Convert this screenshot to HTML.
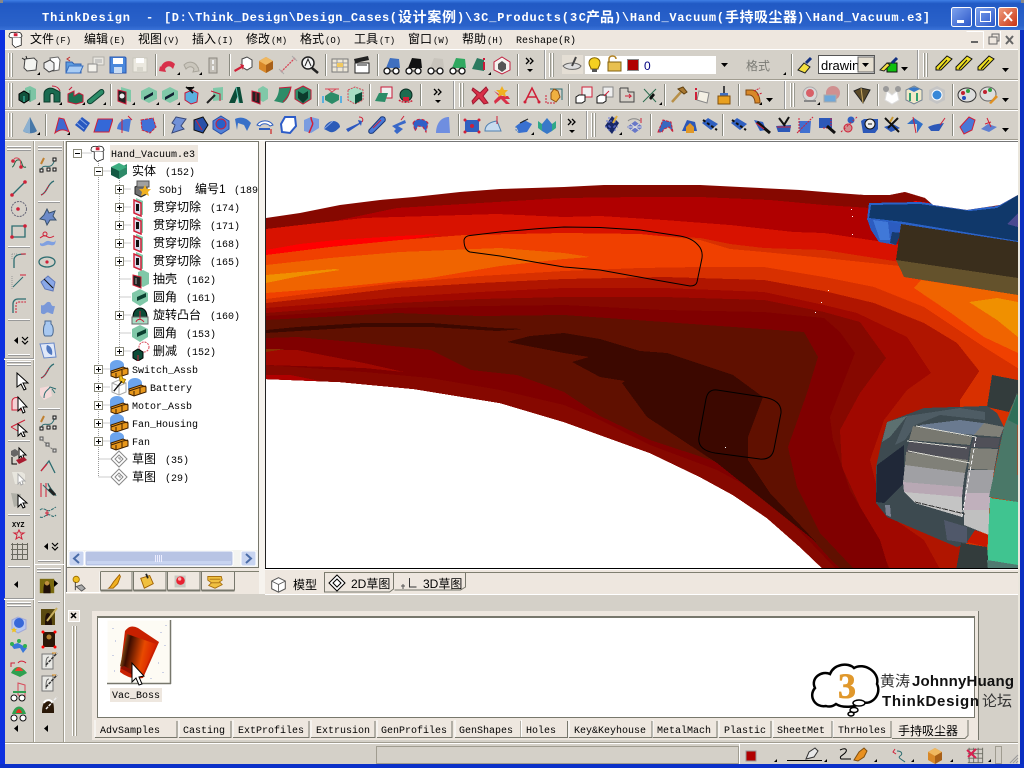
<!DOCTYPE html>
<html><head><meta charset="utf-8"><title>ThinkDesign</title>
<style>
html,body{margin:0;padding:0;width:1024px;height:768px;overflow:hidden;background:#d4d0c8}
svg{position:absolute;left:0;top:0;display:block}
.m{font:10px "Liberation Mono","DejaVu Sans Mono",monospace;fill:#000}
.c{font:12px "Liberation Sans","WenQuanYi Zen Hei","Noto Sans CJK SC",sans-serif;fill:#000}
.t{font:bold 12px "Liberation Mono",monospace;fill:#fff}
.tc{font:bold 14px "Liberation Sans","Noto Sans CJK SC",sans-serif;fill:#fff}
.w{font:bold 15px "Liberation Sans",sans-serif;fill:#111}
.wc{font:15px "Liberation Sans","Noto Sans CJK SC",sans-serif;fill:#333}
</style></head><body>
<svg width="1024" height="768" viewBox="0 0 1024 768" xmlns="http://www.w3.org/2000/svg">
<defs>
<linearGradient id="tg" x1="0" y1="0" x2="0" y2="1"><stop offset="0" stop-color="#3f7fe6"/><stop offset=".12" stop-color="#2159c4"/><stop offset=".85" stop-color="#2a62ca"/><stop offset="1" stop-color="#3a72d8"/></linearGradient>
<linearGradient id="bb" x1="0" y1="0" x2="1" y2="1"><stop offset="0" stop-color="#7fa4ee"/><stop offset="1" stop-color="#2a56c8"/></linearGradient>
<linearGradient id="br" x1="0" y1="0" x2="1" y2="1"><stop offset="0" stop-color="#f0a080"/><stop offset="1" stop-color="#c83010"/></linearGradient>
<linearGradient id="cup" x1="0" y1="0" x2="1" y2=".25"><stop offset="0" stop-color="#d89a30"/><stop offset=".3" stop-color="#3c0c00"/><stop offset=".7" stop-color="#e84a00"/><stop offset="1" stop-color="#d82000"/></linearGradient>
<clipPath id="part"><polygon points="266,218 300,213 340,205 380,200 414,197 460,192 500,189 564,187 604,185 700,185 740,187 800,190 824,192 864,195 890,195 905,192 925,198 933,205 967,210 1000,205 1018,195 1018,568 822,568 800,547 767,518 733,495 700,477 650,453 600,435 564,422 500,403 414,389 340,382 266,379"/></clipPath>
<symbol id="grip" viewBox="0 0 6 24" width="6" height="24"><path d="M.5 0v24M3.5 0v24" stroke="#fff"/><path d="M1.5 0v24M4.5 0v24" stroke="#9a9a90"/></symbol>
<symbol id="sep" viewBox="0 0 2 22" width="2" height="22"><path d="M.5 0v22" stroke="#8a8a80"/><path d="M1.5 0v22" stroke="#fff"/></symbol>
<symbol id="tr" viewBox="0 0 5 5" width="5" height="5"><path d="M4 1v3H1z" fill="#000"/></symbol>
<symbol id="dn" viewBox="0 0 7 4" width="7" height="4"><path d="M0 0h7L3.500 4z" fill="#000"/></symbol>
<symbol id="more" viewBox="0 0 10 18" width="10" height="18"><path d="M1 2l3 3-3 3M5 2l3 3-3 3" fill="none" stroke="#000" stroke-width="1.300"/><path d="M2 13h6l-3 3z" fill="#000"/></symbol>
<symbol id="hm" viewBox="0 0 20 10" width="20" height="10"><path d="M6 1v7L2 4.500z" fill="#000"/><path d="M10 1l3 3 3-3M10 5l3 3 3-3" fill="none" stroke="#000" stroke-width="1.200"/></symbol>
<symbol id="sk" viewBox="0 0 20 20"><path d="M5 4l9-1 3 3-1 9-9 1-3-3z" fill="#f4f4f0" stroke="#444"/><path d="M2 3l3 2M6 1l1 3" stroke="#222"/></symbol>
<symbol id="bx" viewBox="0 0 20 20"><path d="M8 3l8-1 2 3-1 10-6 1z" fill="#fff" stroke="#666"/><path d="M2 8l6-3 4 3v7l-5 2-5-4z" fill="#eee" stroke="#444"/></symbol>
<symbol id="fd" viewBox="0 0 20 20"><path d="M2 7h6l2 2h7v9H2z" fill="#5c9ce0" stroke="#3060b0"/><path d="M2 18l3-7h14l-3 7z" fill="#a8ccf4" stroke="#3a70c0"/><path d="M6 2L3 4l3 2" fill="none" stroke="#c03030"/></symbol>
<symbol id="st" viewBox="0 0 20 20"><path d="M7 2h11v8H7z" fill="#e8e6e0" stroke="#b0aea8"/><path d="M2 9h9v8H2z" fill="#f4f2ec" stroke="#888"/><path d="M9 5h7M9 7h7" stroke="#aaa"/></symbol>
<symbol id="fp" viewBox="0 0 20 20"><path d="M2 2h15l1 1v15H2z" fill="#4a88dc" stroke="#2a58b0"/><path d="M5 3h10v6H5z" fill="#fff"/><path d="M6 12h8v6H6z" fill="#c8dcf4"/></symbol>
<symbol id="fg" viewBox="0 0 20 20"><path d="M3 3h14v14H3z" fill="#ece9e0" stroke="#c8c6bc"/><path d="M6 3h8v5H6z" fill="#fff"/><path d="M7 12h6v5H7z" fill="#d8d6cc"/></symbol>
<symbol id="un" viewBox="0 0 20 20"><path d="M3 12c2-6 9-8 14-3l-2 5c-3-4-6-3-8 0l1 3-7-1 1-5z" fill="#d8304a"/></symbol>
<symbol id="ru" viewBox="0 0 20 20"><path d="M17 13c-2-6-9-8-14-3l2 4c3-3 6-3 8 0l-1 3 6-1-1-4z" fill="#cac6bc" stroke="#a8a49a"/></symbol>
<symbol id="gt" viewBox="0 0 20 20"><path d="M6 3h8v15H6z" fill="#c4c0b8" stroke="#8c8880"/><path d="M9 5h2v4H9zM9 11h2v4H9z" fill="#eee"/></symbol>
<symbol id="ac" viewBox="0 0 20 20"><path d="M9 4l5-2 5 3v7l-5 3-5-3z" fill="#fff" stroke="#444"/><path d="M1 15l7-4-1-2 4 1-1 5-1-2-7 4z" fill="#d02038"/></symbol>
<symbol id="oc" viewBox="0 0 20 20"><path d="M10 2l7 4v8l-7 4-7-4V6z" fill="#d88828"/><path d="M10 2l7 4-7 4-7-4z" fill="#f0b860"/><path d="M10 10v8l7-4V6z" fill="#a86018"/></symbol>
<symbol id="ms" viewBox="0 0 20 20"><path d="M3 17L17 3" stroke="#d84858" stroke-dasharray="2 1" stroke-width="1.300"/><path d="M1 14l5 5M14 1l5 5" stroke="#aaa"/></symbol>
<symbol id="mg" viewBox="0 0 20 20"><circle cx="8" cy="8" r="6" fill="#f4f4f4" stroke="#222" stroke-width="1.500"/><path d="M12 13l6 5" stroke="#222" stroke-width="2.500"/><path d="M5 11l3-7 3 7" fill="none" stroke="#222"/></symbol>
<symbol id="tb" viewBox="0 0 20 20"><path d="M2 4h16v13H2z" fill="#eee8d8" stroke="#777"/><path d="M2 8h16M2 12h16M7 4v13M13 4v13" stroke="#999"/><path d="M7 8h6v4H7z" fill="#f0c860"/></symbol>
<symbol id="cl" viewBox="0 0 20 20"><path d="M3 8h14v10H3z" fill="#fff" stroke="#222"/><path d="M2 4l14-3 1 4L3 8z" fill="#222"/><path d="M5 10h10" stroke="#222"/></symbol>
<symbol id="gl" viewBox="0 0 20 20"><path d="M4 13L8 3l9 1 1 9z" fill="currentColor"/><circle cx="5" cy="16" r="3" fill="#fff" stroke="#111" stroke-width="1.300"/><circle cx="14" cy="16" r="3" fill="#fff" stroke="#111" stroke-width="1.300"/><path d="M8 16h3" stroke="#111"/></symbol>
<symbol id="gg" viewBox="0 0 20 20"><path d="M2 14L7 3l7 2 0 11z" fill="#2c7a60"/><path d="M14 3v2M14 7v8" stroke="#c81838" stroke-width="2"/></symbol>
<symbol id="cr" viewBox="0 0 20 20"><path d="M10 2l8 5v8l-8 4-8-4V7z" fill="#f4f4f0" stroke="#c02040"/><path d="M6 9l4-3 4 3v5l-4 3-4-3z" fill="#555"/></symbol>
<symbol id="gb" viewBox="0 0 20 20"><path d="M7 3l5-2 6 3v10l-6 3-5-3z" fill="#7cc4a4"/><path d="M12 5v12" stroke="#4a9a7c"/><path d="M1 9l5-3 5 3v6l-5 3-5-3z" fill="#12523c" stroke="#000"/><path d="M6 11v6" stroke="#4cb"/></symbol>
<symbol id="gc" viewBox="0 0 20 20"><path d="M2 17V9c0-5 6-7 10-5l6 3v10h-6V10c0-2-4-2-4 0v7z" fill="#1a6a50" stroke="#0a3a2a"/><path d="M10 1c4 0 7 2 8 5" stroke="#c81838" fill="none"/></symbol>
<symbol id="ge" viewBox="0 0 20 20"><path d="M3 9l6-3v5l5-3 4 2v7l-7 2-8-2z" fill="#1c7050" stroke="#c81838"/><path d="M4 5l3-3" stroke="#c81838"/></symbol>
<symbol id="gp" viewBox="0 0 20 20"><path d="M2 15L14 5c3-2 5 2 3 4L6 18c-3 2-6-1-4-3z" fill="#2c8c68" stroke="#0c4030"/></symbol>
<symbol id="gh" viewBox="0 0 20 20"><path d="M6 2l10 3v12l-10-3z" fill="#80c8a8"/><path d="M3 5l8 2v12l-8-3z" fill="#222" stroke="#c81838"/><circle cx="7" cy="11" r="2.500" fill="#eee"/></symbol>
<symbol id="gf" viewBox="0 0 20 20"><path d="M10 2l8 4v8l-8 4-8-4V6z" fill="#80c8a8"/><path d="M5 12l9-5v3l-9 5z" fill="#123"/></symbol>
<symbol id="gv" viewBox="0 0 20 20"><path d="M4 8l7-3 6 3-1 9-6 2-6-4z" fill="#5ab0e0" stroke="#c81838"/><path d="M5 2l4 3 4-3M9 5l3 3" stroke="#111" stroke-width="1.600"/></symbol>
<symbol id="gm" viewBox="0 0 20 20"><path d="M8 3l10-1v13l-10 1z" fill="#80c8a8"/><path d="M2 18l8-8" stroke="#222" stroke-width="2"/><path d="M6 6l9 3v7" fill="none" stroke="#c81838"/></symbol>
<symbol id="ga" viewBox="0 0 20 20"><path d="M3 18L10 2h4l3 16h-4l-1-8-3 8z" fill="#0c4c38"/><path d="M10 2l3 16" stroke="#6cb"/></symbol>
<symbol id="gn" viewBox="0 0 20 20"><path d="M8 4l5-3 5 3v10l-5 3-5-3z" fill="#80c8a8"/><path d="M2 6l8 2v11l-8-3zM6 8v8" fill="#222" stroke="#c81838"/></symbol>
<symbol id="gs" viewBox="0 0 20 20"><path d="M6 3l12-1c-1 6-2 12-8 16L1 16c3-3 5-8 5-13z" fill="#2c8c68"/><path d="M6 3l12-1c-1 6-3 10-8 15" fill="none" stroke="#c81838"/></symbol>
<symbol id="gx" viewBox="0 0 20 20"><path d="M10 1l8 4v9l-8 5-8-5V5z" fill="#2c8c68" stroke="#c81838"/><path d="M10 9l5-3v7l-5 5zM10 9L5 6v7l5 5z" fill="#0c3c2c"/></symbol>
<symbol id="gq" viewBox="0 0 20 20"><path d="M3 11l6-4 8 3v5l-7 4-7-4z" fill="#2c8c68"/><path d="M3 4h14M6 4l4 3 4-3" stroke="#d84858" fill="none"/><path d="M1 11v7M19 11v7" stroke="#5ab0e0" stroke-width="2"/></symbol>
<symbol id="gw" viewBox="0 0 20 20"><path d="M3 5l7-3 8 3v10l-8 4-7-4z" fill="#a8dcc4" stroke="#d84858" stroke-dasharray="2 1"/><path d="M10 10l7-3v8l-7 4z" fill="#0c4c38"/></symbol>
<symbol id="gy" viewBox="0 0 20 20"><path d="M7 2h11v11H7z" fill="#eee" stroke="#c81838"/><path d="M1 16l4-8h9l-3 9z" fill="#2c8c68"/></symbol>
<symbol id="gz" viewBox="0 0 20 20"><circle cx="10" cy="10" r="6" fill="#1c6c50" stroke="#0a2a20"/><path d="M3 15c3 3 11 3 14 0" stroke="#d02038" fill="none" stroke-dasharray="2 1" stroke-width="1.500"/><path d="M7 12h6v4H7z" fill="#d02038"/></symbol>
<symbol id="xr" viewBox="0 0 20 20"><path d="M3 3l7 5 6-6 2 3-5 6 5 7-4 1-5-6-6 6-1-3 5-6-5-5z" fill="#d83048" stroke="#a01830"/></symbol>
<symbol id="xs" viewBox="0 0 20 20"><path d="M2 6l8 5 6 0 2 3-5 0 5 5-4 0-5-5-6 5-1-3 5-5z" fill="#d83048"/><path d="M10 1l2 4 4 0-3 3 1 4-4-2-4 2 1-4-3-3 4 0z" fill="#f0b020"/></symbol>
<symbol id="aa" viewBox="0 0 20 20"><path d="M3 17L10 3l7 14M6 12h8" fill="none" stroke="#d02038" stroke-width="1.500"/><circle cx="3" cy="17" r="1.500" fill="#d02038"/><circle cx="17" cy="17" r="1.500" fill="#d02038"/></symbol>
<symbol id="ha" viewBox="0 0 20 20"><path d="M6 4h12v11" fill="none" stroke="#2c6c70"/><path d="M7 8l3-4 4 2 2 6-4 5-5-3z" fill="#f0b040" stroke="#905010"/><path d="M2 10v8h9" fill="none" stroke="#d02038" stroke-dasharray="2 1"/></symbol>
<symbol id="co" viewBox="0 0 20 20"><path d="M8 2h10v10H8z" fill="#eee" stroke="#d02038"/><path d="M2 12l3-2h6v6l-3 2H2z" fill="#fff" stroke="#111"/></symbol>
<symbol id="cp" viewBox="0 0 20 20"><path d="M8 2h10v10H8z" fill="#eee" stroke="#888"/><path d="M2 12l3-2h6v6l-3 2H2z" fill="#fff" stroke="#111"/><path d="M9 11l5-5" stroke="#d02038"/></symbol>
<symbol id="cq" viewBox="0 0 20 20"><path d="M3 3h8v4M3 3v14h14V7h-6" fill="none" stroke="#444"/><path d="M8 11h6l-2-2M14 11l-2 2" stroke="#d02038" fill="none"/></symbol>
<symbol id="cs" viewBox="0 0 20 20"><path d="M3 17L16 4M4 4l12 13" stroke="#2c6c50"/><path d="M9 13l4-5 2 2-4 5z" fill="#111"/></symbol>
<symbol id="hm2" viewBox="0 0 20 20"><path d="M3 17L12 7" stroke="#b89048" stroke-width="2.500"/><path d="M9 4l5-2 4 5-3 2z" fill="#a87830" stroke="#604010"/></symbol>
<symbol id="in" viewBox="0 0 20 20"><path d="M7 6l10 2-2 10-10-3z" fill="#f4f0e4" stroke="#888"/><path d="M3 3h2v2H3zM3 7h2v8H3z" fill="#d02038"/></symbol>
<symbol id="bu" viewBox="0 0 20 20"><path d="M9 1h2v7H9z" fill="#444"/><path d="M6 8h8v3H6z" fill="#4070c0"/><path d="M4 11h12v8H4z" fill="#e8a020" stroke="#805010"/></symbol>
<symbol id="pi" viewBox="0 0 20 20"><path d="M2 5h6c5 0 8 6 8 13h-5c0-4-2-8-6-8H2z" fill="#d88828" stroke="#804810"/><path d="M10 6l6-3M13 10l5-2" stroke="#d02038" stroke-dasharray="2 1"/></symbol>
<symbol id="rs" viewBox="0 0 20 20"><circle cx="10" cy="9" r="7" fill="#d8d8d8" stroke="#aaa"/><circle cx="10" cy="8" r="4" fill="#d86068"/><path d="M4 16h12" stroke="#888" stroke-width="2"/></symbol>
<symbol id="rt" viewBox="0 0 20 20"><circle cx="11" cy="8" r="7" fill="#d09090"/><path d="M2 10h12v7H2z" fill="#70a8d8" stroke="#aaa"/></symbol>
<symbol id="ey" viewBox="0 0 20 20"><path d="M2 6l7-3 9 2-7 13z" fill="#5a4a28" stroke="#222"/><path d="M9 3l2 15" stroke="#c8a860"/></symbol>
<symbol id="wt" viewBox="0 0 20 20"><path d="M5 6l5 4 5-4 2 9-7 4-7-4z" fill="#fff" stroke="#ddd"/><circle cx="4" cy="4" r="3" fill="#999"/><circle cx="16" cy="4" r="3" fill="#999"/></symbol>
<symbol id="hx" viewBox="0 0 20 20"><path d="M10 1l8 4v10l-8 4-8-4V5z" fill="#f0e8c8" stroke="#708090"/><path d="M4 4l6 3 6-3-6-2z" fill="#3878c8"/><path d="M6 8v8M13 8v8" stroke="#30a070" stroke-width="2"/></symbol>
<symbol id="hb" viewBox="0 0 20 20"><path d="M10 1l8 4v10l-8 4-8-4V5z" fill="#c4c4c4"/><circle cx="10" cy="10" r="5" fill="#3888d8" stroke="#fff"/></symbol>
<symbol id="pa" viewBox="0 0 20 20"><ellipse cx="10" cy="10" rx="9" ry="7" fill="#ddd" stroke="#333"/><circle cx="6" cy="8" r="2" fill="#c02030"/><circle cx="11" cy="6" r="2" fill="#30a040"/><circle cx="7" cy="13" r="2" fill="#2050c0"/></symbol>
<symbol id="pb" viewBox="0 0 20 20"><ellipse cx="9" cy="9" rx="8" ry="7" fill="#ddd" stroke="#666"/><circle cx="6" cy="7" r="2" fill="#c02030"/><circle cx="11" cy="5" r="2" fill="#30a040"/><path d="M10 18l7-8 2 2-7 7z" fill="#e09020"/></symbol>
<symbol id="pc" viewBox="0 0 20 20"><path d="M2 13L13 2l5 3-11 11-5 0z" fill="#f0e020" stroke="#111"/><path d="M5 15l8-9" stroke="#111"/></symbol>
<symbol id="bc" viewBox="0 0 20 20"><path d="M10 2l7 14c-3 3-11 3-14 0z" fill="#4878a8"/><path d="M10 2l-7 14c2 2 5 2 7 2z" fill="#8cb0d0"/></symbol>
<symbol id="bf" viewBox="0 0 20 20"><path d="M5 18l4-15 5 1 5 13c-5-3-9-3-14 1z" fill="#4068d0" stroke="#d02038"/></symbol>
<symbol id="bg" viewBox="0 0 20 20"><path d="M3 10L10 2l8 6-6 9z" fill="#2858c0"/><path d="M8 4l7 6M5 8l7 6" stroke="#88a8e8"/></symbol>
<symbol id="bp" viewBox="0 0 20 20"><path d="M5 4h15l-4 13H1z" fill="#3468d8" stroke="#d02038"/></symbol>
<symbol id="bk" viewBox="0 0 20 20"><path d="M2 14C3 6 9 3 16 4l-2 13z" fill="#4878d8"/><path d="M7 4v14M13 1l4 4" stroke="#d02038"/></symbol>
<symbol id="bl" viewBox="0 0 20 20"><path d="M3 5l12-2 3 9-6 6-8-3z" fill="#4070d8" stroke="#d02038" stroke-dasharray="3 1"/></symbol>
<symbol id="bw" viewBox="0 0 20 20"><path d="M8 2l10 2-5 7 3 3-12 4 3-8-3-2z" fill="#7090d8" stroke="#384878"/></symbol>
<symbol id="bd" viewBox="0 0 20 20"><path d="M4 5l9-3 5 8-5 8-9-3z" fill="#2850a8" stroke="#111"/><path d="M6 5l6 10" stroke="#d02038"/></symbol>
<symbol id="bo" viewBox="0 0 20 20"><path d="M10 1l8 5v8l-8 5-8-5V6z" fill="#5080d8" stroke="#2850a8"/><circle cx="10" cy="9" r="5" fill="#2860c8" stroke="#d02038"/></symbol>
<symbol id="bh" viewBox="0 0 20 20"><path d="M2 4c6-3 12-1 16 4l-4 8-3-6-6-2-1 7z" fill="#3870c8"/></symbol>
<symbol id="bi" viewBox="0 0 20 20"><path d="M2 10c3-5 12-6 16 0l-3 1C12 8 7 8 5 11z" fill="#fff" stroke="#3060c0"/><path d="M4 14h11" stroke="#3060c0" stroke-width="2"/><path d="M16 14v5" stroke="#c00"/></symbol>
<symbol id="bj" viewBox="0 0 20 20"><path d="M3 9l4-7h10l1 9-6 7-8-1z" fill="#fff" stroke="#2c5cc8" stroke-width="2"/></symbol>
<symbol id="bm" viewBox="0 0 20 20"><path d="M3 5l7-3 8 2v9l-8 5-7-2z" fill="#7a9ce0"/><path d="M10 2c0 5 3 5 1 9l-3 7" stroke="#d02038" fill="none" stroke-width="1.500"/></symbol>
<symbol id="bn" viewBox="0 0 20 20"><path d="M2 14c1-5 6-8 9-8 4 0 7 3 7 6-3 3-6 6-10 5z" fill="#2c5cb8"/><path d="M2 14l9-8" stroke="#88a8e8"/></symbol>
<symbol id="bq" viewBox="0 0 20 20"><path d="M1 14l13-6-1-3 4 1-1 5-1-2-12 8z" fill="#2c58c0"/><path d="M14 2c3 0 5 2 3 5" stroke="#d02038" fill="none"/></symbol>
<symbol id="bs" viewBox="0 0 20 20"><path d="M2 15L14 2c3-1 5 1 4 4L6 18c-3 1-5 0-4-3z" fill="#4878d8" stroke="#183878"/><path d="M6 13l8-8" stroke="#d02038"/></symbol>
<symbol id="bt" viewBox="0 0 20 20"><path d="M3 11l13-6 1 3-8 3 5 3-6 5-3-3 2-2z" fill="#3868c8"/><path d="M12 5l3-4" stroke="#d02038"/></symbol>
<symbol id="bu2" viewBox="0 0 20 20"><path d="M2 8c3-5 11-5 15 0l-2 9-3-5-5-1-3 5z" fill="#3060c8" stroke="#d02038" stroke-dasharray="3 2"/></symbol>
<symbol id="bv" viewBox="0 0 20 20"><path d="M3 18c0-8 4-16 13-16l1 16z" fill="#6f8ee0"/></symbol>
<symbol id="by" viewBox="0 0 20 20"><path d="M3 5h14v12H3z" fill="#3060c0"/><circle cx="3" cy="5" r="1.500" fill="#d02038"/><circle cx="17" cy="5" r="1.500" fill="#d02038"/><circle cx="3" cy="17" r="1.500" fill="#d02038"/><circle cx="17" cy="17" r="1.500" fill="#d02038"/><circle cx="10" cy="11" r="2" fill="#d02038"/></symbol>
<symbol id="bz" viewBox="0 0 20 20"><path d="M2 16c0-6 5-9 12-10l4 10z" fill="#c8dcf0" stroke="#5080b0"/><path d="M14 1v8" stroke="#d02038"/></symbol>
<symbol id="b1" viewBox="0 0 20 20"><path d="M2 11l8-6 8 4-5 8-8 1z" fill="#3870d0"/><path d="M2 11v4l3 3" fill="none" stroke="#5080c0" stroke-dasharray="2 1"/><path d="M6 8l8-4" stroke="#222"/></symbol>
<symbol id="b2" viewBox="0 0 20 20"><path d="M5 9l5-6 5 6v7l-5 3-5-3z" fill="#3878c8"/><path d="M1 6l4 3v7l-4-3zM19 6l-4 3v7l4-3z" fill="#30a888"/></symbol>
<symbol id="k1" viewBox="0 0 20 20"><path d="M10 1l7 7-7 11-7-8z" fill="#182868"/><path d="M4 6h12M3 12h13M7 2v16M13 2v16" stroke="#6878d8" stroke-dasharray="2 2"/><path d="M15 1l-4 7" stroke="#e0b040" stroke-width="2"/></symbol>
<symbol id="k2" viewBox="0 0 20 20"><path d="M2 12l8-6 8 6-8 6z" fill="#6878c8"/><path d="M3 12h15M6 9l8 6M14 9l-8 6" stroke="#ddd"/><path d="M3 6c3-3 9-3 12 0" stroke="#888" fill="none"/><path d="M16 3v5" stroke="#d02038"/></symbol>
<symbol id="k3" viewBox="0 0 20 20"><path d="M3 17L8 5l8 2 2 10-4-5-5 2-2 3z" fill="#3868c0" stroke="#d02038" stroke-dasharray="3 1"/></symbol>
<symbol id="k4" viewBox="0 0 20 20"><path d="M3 16L8 5l8 2 2 9z" fill="#2c58b8"/><path d="M7 12l4-4 4 4v6H7z" fill="#e09828"/></symbol>
<symbol id="k5" viewBox="0 0 20 20"><path d="M2 8l6-5 10 6-7 6z" fill="#3060c0"/><path d="M3 5l14 10" stroke="#111" stroke-width="2" stroke-dasharray="3 2"/></symbol>
<symbol id="k6" viewBox="0 0 20 20"><path d="M2 5l9 2 3 8-6 1z" fill="#3060c0"/><path d="M5 7l13 11" stroke="#111" stroke-width="3"/><path d="M4 8l8 6" stroke="#d02038"/></symbol>
<symbol id="k7" viewBox="0 0 20 20"><path d="M2 11l15-1-1 7H4z" fill="#2c58b8"/><path d="M5 3l6 8M15 2l-5 8" stroke="#111" stroke-width="2"/><path d="M3 12h14" stroke="#d02038"/></symbol>
<symbol id="k8" viewBox="0 0 20 20"><path d="M4 6h12l-1 12H5z" fill="#4070d0"/><path d="M2 18L18 2M4 3v15" stroke="#d02038" stroke-dasharray="2 1"/></symbol>
<symbol id="k9" viewBox="0 0 20 20"><path d="M2 3h13v10H2z" fill="#2c58b8"/><path d="M14 3v8M6 13h9" stroke="#d02038" stroke-dasharray="2 1"/><path d="M10 11l8 7" stroke="#111" stroke-width="3"/></symbol>
<symbol id="j1" viewBox="0 0 20 20"><circle cx="12" cy="5" r="3.500" fill="#3060c0"/><circle cx="9" cy="13" r="4" fill="#d09090" stroke="#d02038"/><path d="M2 17L18 2" stroke="#d02038" stroke-dasharray="2 2"/></symbol>
<symbol id="j2" viewBox="0 0 20 20"><path d="M1 6l3-2h14v10l-3 4H3z" fill="#2c58b8"/><circle cx="10" cy="9" r="5" fill="#eee" stroke="#111"/><path d="M8 9h4" stroke="#111"/></symbol>
<symbol id="j3" viewBox="0 0 20 20"><path d="M2 12l9-3 7 4-9 4z" fill="#2c58b8"/><path d="M3 3l14 14M16 3L6 13" stroke="#111" stroke-width="2"/><path d="M11 2l-3 5" stroke="#c89830" stroke-width="2"/></symbol>
<symbol id="j4" viewBox="0 0 20 20"><path d="M2 9l7-6 9 6-6 9V9z" fill="#3070c8"/><path d="M8 2l3 16" stroke="#d02038"/></symbol>
<symbol id="j5" viewBox="0 0 20 20"><path d="M1 12c6-3 11-3 16-4l-5 8H4z" fill="#2c58b8"/><path d="M13 10l5-7" stroke="#d02038"/></symbol>
<symbol id="j6" viewBox="0 0 20 20"><path d="M3 12L12 2l6 3-3 10-8 4z" fill="#4878d8" stroke="#d02038"/></symbol>
<symbol id="j7" viewBox="0 0 20 20"><path d="M2 14l7-5 9 3-8 5z" fill="#6080d0"/><path d="M8 3l4 9M6 9l6-2" stroke="#d02038"/></symbol>
<symbol id="ts" viewBox="0 0 20 20"><path d="M3 12c3 0 2-8 7-7 4 0 2 9 7 7" fill="none" stroke="#264"/><path d="M5 4c2-2 5-1 6 1 1 2 0 5 2 7" fill="none" stroke="#d84858"/><circle cx="4" cy="6" r="1.800" fill="#d02038"/><circle cx="12" cy="12" r="1.800" fill="#d02038"/></symbol>
<symbol id="li" viewBox="0 0 20 20"><path d="M3 17L16 4" stroke="#2c6c70" stroke-width="1.300"/><circle cx="3" cy="17" r="1.800" fill="#d02038"/><circle cx="16" cy="4" r="1.800" fill="#d02038"/></symbol>
<symbol id="ci" viewBox="0 0 20 20"><circle cx="10" cy="10" r="7.500" fill="none" stroke="#667" stroke-dasharray="2 1"/><circle cx="9" cy="10" r="1.800" fill="#d02038"/></symbol>
<symbol id="re" viewBox="0 0 20 20"><path d="M3 4h13v11H3z" fill="none" stroke="#2c6c70" stroke-width="1.300"/><circle cx="3" cy="15" r="1.800" fill="#d02038"/><circle cx="16" cy="4" r="1.800" fill="#d02038"/></symbol>
<symbol id="fa" viewBox="0 0 20 20"><path d="M5 18V10c0-4 3-6 11-6" fill="none" stroke="#2c6c70" stroke-width="1.300"/><path d="M3 4h6M3 4v6" stroke="#999" stroke-dasharray="1 1"/><path d="M12 4h5" stroke="#d02038"/></symbol>
<symbol id="fb" viewBox="0 0 20 20"><path d="M4 15L14 5" stroke="#2c6c70"/><path d="M3 4v14" stroke="#999" stroke-dasharray="1 1"/><path d="M11 3h6" stroke="#d02038"/></symbol>
<symbol id="fc" viewBox="0 0 20 20"><path d="M4 18V9c0-3 2-5 5-5h8" fill="none" stroke="#2c6c70" stroke-width="1.300"/><path d="M7 18V10c0-2 1-3 3-3h7" fill="none" stroke="#d02038" stroke-dasharray="2 1"/></symbol>
<symbol id="ar" viewBox="0 0 20 20"><path d="M5 2v14l4-3 3 6 2-1-3-6h5z" fill="#fff" stroke="#000"/></symbol>
<symbol id="ah" viewBox="0 0 20 20"><path d="M3 16V8c0-6 8-6 9 0v8z" fill="#f4d0d4" stroke="#d02038"/><path d="M9 3v14l3-3 2 5 2-1-2-5h4z" fill="#fff" stroke="#000"/></symbol>
<symbol id="an" viewBox="0 0 20 20"><path d="M2 10L16 3M2 10l12 7" stroke="#d02038"/><path d="M9 7v12l3-3 2 4 2-1-2-4h4z" fill="#fff" stroke="#000"/></symbol>
<symbol id="ab" viewBox="0 0 20 20"><path d="M2 5l4-2 3 2v4l-4 2-3-2z" fill="#666"/><path d="M10 2v10l2-2 2 4 1-1-1-4h3z" fill="#fff" stroke="#000"/><path d="M7 14l8-3 3 3-8 4z" fill="#a81c30"/><path d="M3 11v7h5" stroke="#000" fill="none"/></symbol>
<symbol id="ad" viewBox="0 0 20 20"><path d="M3 4h10l3 2v10H6z" fill="#e8e6de"/><path d="M9 6v10l2-2 1 3 2-1-1-3h3z" fill="#fff" stroke="#aaa"/></symbol>
<symbol id="ae" viewBox="0 0 20 20"><path d="M2 3l10 1-2 11-5 2z" fill="#b0b0a8"/><path d="M9 5v12l3-3 2 4 2-1-2-4h4z" fill="#fff" stroke="#000"/></symbol>
<symbol id="xy" viewBox="0 0 20 20"><path d="M10 9l1.500 3h3.500l-3 2 1 4-3-2-3 2 1-4-3-2h3.500z" fill="none" stroke="#d02038"/></symbol>
<symbol id="gd" viewBox="0 0 20 20"><path d="M2 3.500h16M2 8.500h16M2 13.500h16M2 18.500h16M3.500 2v17M8.500 2v17M13.500 2v17M18.500 2v17" stroke="#6a6a60"/></symbol>
<symbol id="st2" viewBox="0 0 20 20"><path d="M9 2l2 4 6-2-2 5 3 4-6 0-3 5-2-5-5-1 4-4z" fill="#6c8ac8" stroke="#38506c"/></symbol>
<symbol id="sw" viewBox="0 0 20 20"><path d="M2 15c4 2 5-3 9-2s5 2 7-1l-1 4c-3 3-5 0-8 1s-5 2-7 0z" fill="#80a0e0"/><path d="M2 10c3-2 4-3 6-2s3 3 8 0" fill="none" stroke="#d02038"/><circle cx="7" cy="6" r="2" fill="none" stroke="#d02038"/></symbol>
<symbol id="el" viewBox="0 0 20 20"><ellipse cx="9" cy="10" rx="8" ry="5" fill="none" stroke="#2c6c70" stroke-width="1.300"/><circle cx="9" cy="10" r="1.600" fill="#d02038"/></symbol>
<symbol id="bh2" viewBox="0 0 20 20"><path d="M3 9l7-6 7 6-2 9-8-2z" fill="#8aa8e8" stroke="#6078b8"/><path d="M6 6l9 9" stroke="#111"/></symbol>
<symbol id="bw2" viewBox="0 0 20 20"><path d="M3 8c4 2 5-4 8-3 3 0 1 5 6 4l-2 8c-3 0-5-3-7-1s-4 1-5 0z" fill="#7a98d8"/></symbol>
<symbol id="vb" viewBox="0 0 20 20"><path d="M7 3h6v3c3 2 3 11 0 12H7c-2-1-2-10 0-12z" fill="#a8c8f0" stroke="#4a6890"/></symbol>
<symbol id="bv2" viewBox="0 0 20 20"><path d="M2 4l14-1 2 14-12 1z" fill="#e0e8f8" stroke="#6888c8"/><path d="M9 5c4 1 6 5 5 10-4-1-7-5-5-10z" fill="#5078c0"/></symbol>
<symbol id="cu" viewBox="0 0 20 20"><path d="M3 17c6-2 7-12 13-14" fill="none" stroke="#2c6c70" stroke-width="1.300"/><path d="M3 17c4-1 6-7 8-10" fill="none" stroke="#d02038" stroke-dasharray="2 1"/></symbol>
<symbol id="cw" viewBox="0 0 20 20"><path d="M2 5l10-2 2 10-8 4-4-5z" fill="#f4d8d8"/><path d="M6 15c0-8 5-8 6-11l6 2M14 6l3 4" fill="none" stroke="#2c6c70"/></symbol>
<symbol id="dt" viewBox="0 0 20 20"><path d="M3 15c3-9 10 3 14-11" fill="none" stroke="#2c6c70"/><g fill="#eee" stroke="#111"><path d="M2 14h3v3H2zM15 3h3v3h-3zM9 13h3v3H9zM15 13h3v3h-3z"/></g><path d="M6 3l-3 6" stroke="#c08030" stroke-width="2"/></symbol>
<symbol id="dv" viewBox="0 0 20 20"><g fill="#ddd" stroke="#555"><path d="M2 2h3v3H2zM8 8h3v3H8zM15 14h3v3h-3z"/></g><path d="M4 5l5 4M10 11l6 4" stroke="#777" stroke-dasharray="2 1"/></symbol>
<symbol id="dx" viewBox="0 0 20 20"><path d="M3 14L11 4l6 12" fill="none" stroke="#2c6c70" stroke-width="1.300"/><path d="M3 14l6-7" stroke="#d02038" stroke-width="1.300"/></symbol>
<symbol id="dy" viewBox="0 0 20 20"><path d="M3 3v14M8 3v14" stroke="#d02038"/><path d="M10 3c0 5 6 7 8 13M5 5l10 10" stroke="#2c6c70"/><path d="M11 9l6 6" stroke="#222" stroke-width="3"/></symbol>
<symbol id="dz" viewBox="0 0 20 20"><path d="M2 8c4-4 7 3 11 0l5-3M2 15c4 2 6-4 10-2s4 2 6 0" fill="none" stroke="#2c6c70" stroke-dasharray="3 1"/><path d="M9 8v6M7 11h4" stroke="#d02038"/></symbol>
<symbol id="ml" viewBox="0 0 20 20"><path d="M2 2h16v16H2z" fill="#7a6a10"/><path d="M6 18c0-6 0-12 4-12s4 6 4 12z" fill="#201008"/><circle cx="10" cy="7" r="2.500" fill="#c09040"/></symbol>
<symbol id="ms2" viewBox="0 0 20 20"><path d="M2 2h14v16H2z" fill="#5a4a10"/><path d="M6 18c0-6 0-12 3-12s4 6 4 12z" fill="#201008"/><path d="M8 14L18 1" stroke="#c8b060" stroke-width="2"/></symbol>
<symbol id="ml3" viewBox="0 0 20 20"><path d="M4 3h12v15H4z" fill="#2a1808"/><circle cx="10" cy="8" r="2.500" fill="#b08030"/><g fill="#f00"><circle cx="4" cy="3" r="1.500"/><circle cx="16" cy="3" r="1.500"/><circle cx="4" cy="18" r="1.500"/><circle cx="16" cy="18" r="1.500"/></g></symbol>
<symbol id="mw" viewBox="0 0 20 20"><path d="M3 3h11v15H3z" fill="#e8e8e4" stroke="#777"/><path d="M7 16c0-6 0-10 3-10" fill="none" stroke="#666"/><path d="M7 14L18 2" stroke="#333" stroke-dasharray="3 1" stroke-width="1.500"/><path d="M13 2h4" stroke="#e09020"/></symbol>
<symbol id="md" viewBox="0 0 20 20"><path d="M3 18c0-8 2-13 7-13s5 6 5 13z" fill="#2a1808"/><path d="M5 8c1-3 6-4 8-1" fill="none" stroke="#fff" stroke-width="2"/><path d="M7 14L18 2" stroke="#eee" stroke-dasharray="3 1" stroke-width="1.500"/></symbol>
<symbol id="s1" viewBox="0 0 20 20"><path d="M3 5l6-3 8 3v9l-8 4-6-4z" fill="#b8c8f0" stroke="#a0a8d8"/><circle cx="10" cy="8" r="5" fill="#3868d8"/><path d="M5 12l1 2 2 0-1.500 1.500 .5 2-2-1-2 1 .5-2L2 14h2z" fill="#f0c020"/></symbol>
<symbol id="s2" viewBox="0 0 20 20"><path d="M2 8l7-2 9 5-4 5-3-5-6 1z" fill="#3878d8"/><g fill="#30b050"><circle cx="3" cy="7" r="2"/><circle cx="10" cy="4" r="2"/><circle cx="16" cy="9" r="2"/></g></symbol>
<symbol id="s3" viewBox="0 0 20 20"><path d="M2 14c4-8 10-8 16 0l-7 4z" fill="#30a050"/><path d="M6 12c2-5 6-5 8 0z" fill="#f04030"/><path d="M2 8V4h4M9 4c2-3 6-2 8 0" stroke="#d02038" fill="none"/></symbol>
<symbol id="s4" viewBox="0 0 20 20"><path d="M9 1l7 2v12l-7-2z" fill="none" stroke="#d84858"/><path d="M4 10h13" stroke="#30a050" stroke-width="2"/><circle cx="5" cy="16" r="3" fill="#fff" stroke="#111"/><circle cx="13" cy="16" r="3" fill="#fff" stroke="#111"/></symbol>
<symbol id="s5" viewBox="0 0 20 20"><path d="M3 11c3-10 11-10 14 0z" fill="#30a050"/><path d="M7 10c1-5 5-5 6 0z" fill="#e83020"/><circle cx="5" cy="15" r="3" fill="#fff" stroke="#111"/><circle cx="14" cy="15" r="3" fill="#fff" stroke="#111"/></symbol>
<symbol id="t1" viewBox="0 0 20 20"><path d="M10 7l8-4 0 10-8 5-7-4V8z" fill="#2e8a68"/><path d="M10 2l8 4-8 4-8-4z" fill="#3cae80"/><path d="M10 10v8l-8-4V6z" fill="#145a44"/></symbol>
<symbol id="t2" viewBox="0 0 20 20"><path d="M6 1l7 3v14l-7-2z" fill="#80c8a8"/><path d="M4 3l7 3v13l-7-3z" fill="#dde" stroke="#d02038" stroke-width="1.500"/><path d="M6 7h3v7H6z" fill="#111"/></symbol>
<symbol id="t3" viewBox="0 0 20 20"><path d="M8 3l5-2 6 3v11l-6 3-5-3z" fill="#80c8a8"/><path d="M3 6l8 2v11l-8-3z" fill="#222" stroke="#d02038"/><path d="M6 9v6" stroke="#aaa"/></symbol>
<symbol id="t4" viewBox="0 0 20 20"><path d="M2 6l8-4 8 4v8l-8 5-8-5z" fill="#80c8a8"/><path d="M7 10l9-4v4l-9 4z" fill="#0c4030"/></symbol>
<symbol id="t5" viewBox="0 0 20 20"><path d="M3 12c0-12 14-12 14 0z" fill="#0c4c38" stroke="#000"/><path d="M2 12h16v7H2z" fill="#a8dcc4" stroke="#666"/><path d="M6 17c1-3 5-4 8 0M10 6v8" stroke="#d02038" fill="none"/></symbol>
<symbol id="t6" viewBox="0 0 20 20"><circle cx="14" cy="6" r="5" fill="#fff" stroke="#d84858" stroke-dasharray="2 1"/><path d="M3 11l5-3 5 3v6l-5 3-5-3z" fill="#0c4c38" stroke="#000"/><path d="M8 14v6" stroke="#d02038"/></symbol>
<symbol id="t7" viewBox="0 0 20 20"><path d="M4 8l6-3 6 3v7l-6 3-6-3z" fill="#707070" stroke="#222"/><path d="M6 2h12v6H6z" fill="#a0a0a0" stroke="#555"/><path d="M14 6l2 4 4 0-3 3 1 4-4-2-4 2 1-4-3-3 4 0z" fill="#f0b020"/></symbol>
<symbol id="t8" viewBox="0 0 20 20"><ellipse cx="8" cy="6" rx="7" ry="5" fill="#6ca4ec"/><path d="M1 6h14v7H1z" fill="#6ca4ec"/><path d="M2 12l12-4 5 2v5l-12 4-5-2z" fill="#e8981c" stroke="#402000"/><path d="M2 14l12-4 5-1M7 14v5M13 11v6" stroke="#402000" fill="none"/></symbol>
<symbol id="t9" viewBox="0 0 20 20"><path d="M3 6l7-3 7 3v9l-7 3-7-3z" fill="#fff" stroke="#aaa"/><path d="M3 6l7 3 7-3M10 9v9" stroke="#aaa" fill="none"/></symbol>
<symbol id="ta" viewBox="0 0 20 20"><path d="M10 2l8 8-8 8-8-8z" fill="#fff" stroke="#888"/><path d="M10 6l4 4-4 4-4-4zM9 9h2v2" fill="none" stroke="#888"/></symbol>
<symbol id="r0" viewBox="0 0 24 24"><path d="M3 5c0-3 5-4 8-3 3-1 9 0 8 3 2 1 1 4-3 4H6c-3 0-4-2-3-4z" fill="#fff" stroke="#111"/><path d="M7 9v9l4 4 8-3V9" fill="#fff" stroke="#111"/><path d="M9 3h5v4H9z" fill="#d02038"/></symbol>
<symbol id="ic1" viewBox="0 0 20 20"><circle cx="8" cy="6" r="3.500" fill="#f0c020" stroke="#a07000"/><path d="M7 9v9" stroke="#333"/><path d="M8 14l6-2 4 4-4 3z" fill="#aaa" stroke="#555"/></symbol>
<symbol id="ic2" viewBox="0 0 20 20"><path d="M3 18c3-2 4-6 7-9l5-6 1 2-3 8-5 5z" fill="#f0b020" stroke="#a06000"/></symbol>
<symbol id="ic3" viewBox="0 0 20 20"><path d="M3 7l10-3 4 9-10 5z" fill="#f0c040" stroke="#a06000"/><path d="M9 2l2 5" stroke="#222" stroke-width="2"/></symbol>
<symbol id="ic4" viewBox="0 0 20 20"><path d="M3 3h13v14H3z" fill="#c8c8c0"/><circle cx="10" cy="9" r="5" fill="#e82030"/><circle cx="9" cy="7" r="2" fill="#ffb0b0"/></symbol>
<symbol id="ic5" viewBox="0 0 20 20"><path d="M2 5h15l1 4-3 2 3 3-8 4-7-3 3-3-4-3z" fill="#f0c040" stroke="#a87010"/><path d="M4 8h12M5 12h10" stroke="#a87010"/></symbol>
<symbol id="mo" viewBox="0 0 20 20"><path d="M10 2l8 4v9l-8 4-8-4V6z" fill="#fff" stroke="#555" stroke-width="1.200"/><path d="M2 6l8 4 8-4M10 10v9" stroke="#555" fill="none"/></symbol>
<symbol id="lb" viewBox="0 0 20 20"><path d="M8 1h3l1 3 3 1-2 4-4-2z" fill="#f0c020" stroke="#a07000"/><path d="M11 7L2 18" stroke="#111" stroke-width="1.500"/></symbol>
</defs>

<!-- frame -->
<rect width="1024" height="768" fill="#d4d0c8"/>
<rect width="1024" height="30" fill="url(#tg)"/>
<rect x="0" y="30" width="5" height="738" fill="#0c30e0"/>
<rect x="1020" y="30" width="4" height="738" fill="#0a2ec0"/>
<rect x="1018" y="30" width="2" height="734" fill="#eae6dc"/>
<rect x="0" y="764" width="1024" height="4" fill="#0a30c8"/>
<rect x="0" y="0" width="3" height="3" fill="#888"/><rect x="1021" y="0" width="3" height="3" fill="#888"/>
<text class="t" x="42" y="21" textLength="88">ThinkDesign</text>
<text class="t" x="146" y="21">-</text>
<text class="t" x="164" y="21" textLength="233">[D:\Think_Design\Design_Cases(</text>
<text class="tc" x="398" y="22" textLength="58">设计案例</text>
<text class="t" x="457" y="21" textLength="112">)\3C_Products(</text>
<text class="t" x="570" y="21" textLength="16">3C</text>
<text class="tc" x="586" y="22" textLength="28">产品</text>
<text class="t" x="614" y="21" textLength="110">)\Hand_Vacuum(</text>
<text class="tc" x="725" y="22" textLength="72">手持吸尘器</text>
<text class="t" x="797" y="21" textLength="133">)\Hand_Vacuum.e3]</text>
<rect x="951.500" y="7.500" width="20" height="19" rx="2" fill="url(#bb)" stroke="#fff"/>
<rect x="957" y="20" width="7" height="3" fill="#fff"/>
<rect x="975.500" y="7.500" width="20" height="19" rx="2" fill="url(#bb)" stroke="#fff"/>
<rect x="980.500" y="11.500" width="10" height="10" fill="none" stroke="#fff"/><rect x="980" y="11" width="11" height="2" fill="#fff"/>
<rect x="998.500" y="7.500" width="19" height="19" rx="2" fill="url(#br)" stroke="#fff"/>
<path d="M1004 12l8 9M1012 12l-8 9" stroke="#fff" stroke-width="2"/>

<!-- menu -->
<rect x="5" y="30" width="1013" height="19" fill="#eee7df"/>
<rect x="5" y="49" width="1013" height="1" fill="#fff"/>
<use href="#r0" x="7" y="31" width="18" height="18"/>
<text class="c" x="30" y="43">文件</text><text class="m" x="55" y="43" style="font-size:9px">(F)</text>
<text class="c" x="84" y="43">编辑</text><text class="m" x="109" y="43" style="font-size:9px">(E)</text>
<text class="c" x="138" y="43">视图</text><text class="m" x="163" y="43" style="font-size:9px">(V)</text>
<text class="c" x="192" y="43">插入</text><text class="m" x="217" y="43" style="font-size:9px">(I)</text>
<text class="c" x="246" y="43">修改</text><text class="m" x="271" y="43" style="font-size:9px">(M)</text>
<text class="c" x="300" y="43">格式</text><text class="m" x="325" y="43" style="font-size:9px">(O)</text>
<text class="c" x="354" y="43">工具</text><text class="m" x="379" y="43" style="font-size:9px">(T)</text>
<text class="c" x="408" y="43">窗口</text><text class="m" x="433" y="43" style="font-size:9px">(W)</text>
<text class="c" x="462" y="43">帮助</text><text class="m" x="487" y="43" style="font-size:9px">(H)</text>
<text class="m" x="516" y="43">Reshape(R)</text>
<path d="M966.500 31.500h17v17M1000.500 31v17" stroke="#fff" fill="none"/>
<path d="M971 42h7" stroke="#666" stroke-width="2"/>
<path d="M989 37h8v7h-8zM992 37v-3h7v7h-2" fill="none" stroke="#666"/>
<path d="M1006 36l7 8M1013 36l-7 8" stroke="#666" stroke-width="2"/>

<!-- toolbar row lines -->
<g fill="#a09c90"><rect x="5" y="79" width="1013" height="1"/><rect x="5" y="109" width="1013" height="1"/><rect x="5" y="139" width="1013" height="1"/></g>
<g fill="#fff"><rect x="5" y="80" width="1013" height="1"/><rect x="5" y="110" width="1013" height="1"/><rect x="5" y="140" width="1013" height="1"/></g>
<path d="M545.500 50v29M454.500 81v28M785.500 81v28M587.500 111v28M918.500 50v29" stroke="#fff"/>
<path d="M544.500 50v29M453.500 81v28M784.500 81v28M586.500 111v28M917.500 50v29" stroke="#999"/>
<g>
<use href="#grip" x="8" y="53"/><use href="#grip" x="8" y="83"/><use href="#grip" x="8" y="113"/>
<use href="#grip" x="549" y="53"/><use href="#grip" x="459" y="83"/><use href="#grip" x="790" y="83"/><use href="#grip" x="591" y="113"/><use href="#grip" x="923" y="53"/>
<use href="#sep" x="155" y="54"/><use href="#sep" x="229" y="54"/><use href="#sep" x="325" y="54"/><use href="#sep" x="377" y="54"/><use href="#sep" x="517" y="54"/><use href="#sep" x="791" y="54"/>
<use href="#sep" x="110" y="84"/><use href="#sep" x="317" y="84"/><use href="#sep" x="369" y="84"/><use href="#sep" x="420" y="84"/><use href="#sep" x="517" y="84"/><use href="#sep" x="568" y="84"/><use href="#sep" x="664" y="84"/><use href="#sep" x="738" y="84"/><use href="#sep" x="847" y="84"/><use href="#sep" x="877" y="84"/><use href="#sep" x="952" y="84"/>
<use href="#sep" x="45" y="114"/><use href="#sep" x="163" y="114"/><use href="#sep" x="458" y="114"/><use href="#sep" x="560" y="114"/><use href="#sep" x="650" y="114"/><use href="#sep" x="722" y="114"/><use href="#sep" x="952" y="114"/>
</g>

<!-- row 1 icons -->
<g>
<use href="#sk" x="20" y="55" width="20" height="20"/><use href="#bx" x="42" y="55" width="20" height="20"/><use href="#fd" x="64" y="55" width="20" height="20"/><use href="#st" x="86" y="55" width="20" height="20"/><use href="#fp" x="108" y="55" width="20" height="20"/><use href="#fg" x="130" y="55" width="20" height="20"/>
<use href="#un" x="158" y="55" width="20" height="20"/><use href="#ru" x="181" y="55" width="20" height="20"/><use href="#gt" x="203" y="55" width="20" height="20"/>
<use href="#ac" x="233" y="55" width="20" height="20"/><use href="#oc" x="256" y="55" width="20" height="20"/><use href="#ms" x="278" y="55" width="20" height="20"/><use href="#mg" x="300" y="55" width="20" height="20"/>
<use href="#tb" x="330" y="55" width="20" height="20"/><use href="#cl" x="352" y="55" width="20" height="20"/>
<use href="#gl" x="382" y="55" width="20" height="20" style="color:#4070c0"/><use href="#gl" x="404" y="55" width="20" height="20" style="color:#111"/><use href="#gl" x="426" y="55" width="20" height="20" style="color:#c8c4bc"/><use href="#gl" x="448" y="55" width="20" height="20" style="color:#30a860"/><use href="#gg" x="470" y="55" width="20" height="20"/><use href="#cr" x="492" y="55" width="20" height="20"/>
<use href="#more" x="525" y="56"/>
<rect x="562" y="55" width="21" height="19" fill="#e4ded4"/><path d="M563 66c4-4 14-4 18 0-2 4-14 5-18 0z" fill="#ddd" stroke="#666"/><path d="M572 66l4-9" stroke="#444" stroke-width="2"/>
<rect x="585" y="56" width="148" height="18" fill="#fff"/>
<path d="M589 63c0-7 11-7 11 0 0 3-2 4-2 6h-7c0-2-2-3-2-6z" fill="#f4d020" stroke="#806000"/><rect x="592" y="69" width="5" height="3" fill="#555"/>
<path d="M609 62v-3c0-4 7-4 7 0" fill="none" stroke="#b08020" stroke-width="1.500"/><rect x="608" y="62" width="13" height="9" fill="#e8c050" stroke="#806010"/>
<rect x="627.500" y="59.500" width="11" height="11" fill="#b00000" stroke="#888"/>
<text x="644" y="70" style="font:12px 'Liberation Sans',sans-serif" fill="#000080">0</text>
<rect x="716" y="56" width="17" height="18" fill="#d4d0c8"/><use href="#dn" x="721" y="63"/>
<text x="746" y="70" style="font:12px 'Liberation Sans','Noto Sans CJK SC',sans-serif" fill="#7a7a74">格式</text>
<use href="#tr" x="782" y="71"/>
<path d="M798 70l6-7 6 4-5 6z" fill="#f4e040" stroke="#222"/><path d="M806 63l5-5" stroke="#123080" stroke-width="3"/>
<rect x="818.500" y="55.500" width="56" height="18" fill="#fff" stroke="#555"/><text x="821" y="70" style="font:13px 'Liberation Sans',sans-serif">drawin</text>
<rect x="858" y="57" width="16" height="15" fill="#e6dfd0" stroke="#666"/><use href="#dn" x="862" y="63"/>
<rect x="887" y="63" width="10" height="9" fill="#10c010" stroke="#111"/><path d="M880 70l7-7 3 2-6 6z" fill="#f4e040" stroke="#222"/><path d="M892 63l5-5" stroke="#123080" stroke-width="3"/>
<use href="#dn" x="901" y="67"/>
<use href="#pc" x="934" y="54" width="20" height="20"/><use href="#pc" x="954" y="54" width="20" height="20"/><use href="#pc" x="976" y="54" width="20" height="20"/>
<use href="#dn" x="1002" y="68"/>
</g>

<!-- row 2 icons -->
<g>
<use href="#gb" x="18" y="85" width="20" height="20"/><use href="#gc" x="42" y="85" width="20" height="20"/><use href="#ge" x="65" y="85" width="20" height="20"/><use href="#gp" x="86" y="85" width="20" height="20"/>
<use href="#gh" x="115" y="85" width="20" height="20"/><use href="#gf" x="139" y="85" width="20" height="20"/><use href="#gf" x="160" y="85" width="20" height="20"/><use href="#gv" x="181" y="85" width="20" height="20"/><use href="#gm" x="205" y="85" width="20" height="20"/><use href="#ga" x="226" y="85" width="20" height="20"/><use href="#gn" x="250" y="85" width="20" height="20"/><use href="#gs" x="273" y="85" width="20" height="20"/><use href="#gx" x="293" y="85" width="20" height="20"/>
<use href="#gq" x="322" y="85" width="20" height="20"/><use href="#gw" x="345" y="85" width="20" height="20"/>
<use href="#gy" x="374" y="85" width="20" height="20"/><use href="#gz" x="396" y="85" width="20" height="20"/>
<use href="#more" x="433" y="87"/>
<use href="#xr" x="470" y="85" width="20" height="20"/><use href="#xs" x="492" y="85" width="20" height="20"/>
<use href="#aa" x="522" y="85" width="20" height="20"/><use href="#ha" x="544" y="85" width="20" height="20"/>
<use href="#co" x="574" y="85" width="20" height="20"/><use href="#cp" x="595" y="85" width="20" height="20"/><use href="#cq" x="617" y="85" width="20" height="20"/><use href="#cs" x="640" y="85" width="20" height="20"/>
<use href="#hm2" x="669" y="85" width="20" height="20"/><use href="#in" x="692" y="85" width="20" height="20"/><use href="#bu" x="714" y="85" width="20" height="20"/>
<use href="#pi" x="744" y="85" width="20" height="20"/><use href="#dn" x="766" y="98"/>
<use href="#rs" x="800" y="85" width="20" height="20"/><use href="#rt" x="822" y="85" width="20" height="20"/>
<use href="#ey" x="852" y="85" width="20" height="20"/>
<use href="#wt" x="882" y="85" width="20" height="20"/><use href="#hx" x="904" y="85" width="20" height="20"/><use href="#hb" x="927" y="85" width="20" height="20"/>
<use href="#pa" x="957" y="85" width="20" height="20"/><use href="#pb" x="979" y="85" width="20" height="20"/><use href="#dn" x="1002" y="98"/>
</g>

<!-- row 3 icons -->
<g>
<use href="#bc" x="20" y="115" width="20" height="20"/>
<use href="#bf" x="50" y="115" width="20" height="20"/><use href="#bg" x="72" y="115" width="20" height="20"/><use href="#bp" x="93" y="115" width="20" height="20"/><use href="#bk" x="115" y="115" width="20" height="20"/><use href="#bl" x="138" y="115" width="20" height="20"/>
<use href="#bw" x="168" y="115" width="20" height="20"/><use href="#bd" x="190" y="115" width="20" height="20"/><use href="#bo" x="211" y="115" width="20" height="20"/><use href="#bh" x="233" y="115" width="20" height="20"/><use href="#bi" x="255" y="115" width="20" height="20"/><use href="#bj" x="278" y="115" width="20" height="20"/><use href="#bm" x="301" y="115" width="20" height="20"/><use href="#bn" x="322" y="115" width="20" height="20"/><use href="#bq" x="345" y="115" width="20" height="20"/><use href="#bs" x="367" y="115" width="20" height="20"/><use href="#bt" x="389" y="115" width="20" height="20"/><use href="#bu2" x="411" y="115" width="20" height="20"/><use href="#bv" x="433" y="115" width="20" height="20"/>
<use href="#by" x="462" y="115" width="20" height="20"/><use href="#bz" x="483" y="115" width="20" height="20"/>
<use href="#b1" x="514" y="115" width="20" height="20"/><use href="#b2" x="537" y="115" width="20" height="20"/>
<use href="#more" x="567" y="117"/>
<use href="#k1" x="602" y="115" width="20" height="20"/><use href="#k2" x="625" y="115" width="20" height="20"/>
<use href="#k3" x="655" y="115" width="20" height="20"/><use href="#k4" x="679" y="115" width="20" height="20"/><use href="#k5" x="700" y="115" width="20" height="20"/>
<use href="#k5" x="729" y="115" width="20" height="20"/><use href="#k6" x="752" y="115" width="20" height="20"/><use href="#k7" x="774" y="115" width="20" height="20"/><use href="#k8" x="795" y="115" width="20" height="20"/><use href="#k9" x="817" y="115" width="20" height="20"/><use href="#j1" x="839" y="115" width="20" height="20"/><use href="#j2" x="860" y="115" width="20" height="20"/><use href="#j3" x="882" y="115" width="20" height="20"/><use href="#j4" x="905" y="115" width="20" height="20"/><use href="#j5" x="927" y="115" width="20" height="20"/>
<use href="#j6" x="957" y="115" width="20" height="20"/><use href="#j7" x="979" y="115" width="20" height="20"/><use href="#dn" x="1002" y="128"/>
</g>
<!-- small dropdown marks -->
<g>
<use href="#tr" x="36" y="71"/><use href="#tr" x="176" y="71"/><use href="#tr" x="198" y="71"/><use href="#tr" x="487" y="71"/>
<use href="#tr" x="36" y="101"/><use href="#tr" x="58" y="101"/><use href="#tr" x="81" y="101"/><use href="#tr" x="102" y="101"/><use href="#tr" x="131" y="101"/><use href="#tr" x="155" y="101"/><use href="#tr" x="176" y="101"/><use href="#tr" x="658" y="101"/><use href="#tr" x="816" y="101"/><use href="#tr" x="758" y="101"/>
<use href="#tr" x="36" y="131"/><use href="#tr" x="66" y="131"/><use href="#tr" x="530" y="131"/><use href="#tr" x="618" y="131"/>
</g>

<!-- left toolbars -->
<path d="M34.500 141v602M64.500 141v602" stroke="#fff"/><path d="M33.500 141v602M63.500 141v602" stroke="#a09c90"/>
<g stroke-width="1"><path d="M7 146.500h24M7 149.500h24M38 146.500h24M38 149.500h24M7 361.500h24M7 364.500h24M7 602.500h24M7 605.500h24M37 568.500h24M37 571.500h24" stroke="#fff"/><path d="M7 147.500h24M7 150.500h24M38 147.500h24M38 150.500h24M7 362.500h24M7 365.500h24M7 603.500h24M7 606.500h24M37 569.500h24M37 572.500h24" stroke="#999"/>
<path d="M8 246.500h22M8 319.500h22M8 354.500h22M8 440.500h22M8 514.500h22M8 566.500h22M38 201.500h22M38 408.500h22M38 560.500h22M38 601.500h22" stroke="#fff"/><path d="M8 247.500h22M8 320.500h22M8 355.500h22M8 441.500h22M8 515.500h22M8 567.500h22M38 202.500h22M38 409.500h22M38 561.500h22M38 602.500h22" stroke="#999"/>
<path d="M4 358.500h30M4 598.500h30" stroke="#999"/><path d="M4 359.500h30M4 599.500h30M35 564.500h30" stroke="#fff"/></g>
<g>
<use href="#ts" x="9" y="155" width="20" height="20"/><use href="#li" x="9" y="178" width="20" height="20"/><use href="#ci" x="9" y="199" width="20" height="20"/><use href="#re" x="9" y="222" width="20" height="20"/>
<use href="#fa" x="9" y="250" width="20" height="20"/><use href="#fb" x="9" y="272" width="20" height="20"/><use href="#fc" x="9" y="295" width="20" height="20"/>
<use href="#hm" x="12" y="336"/>
<use href="#ar" x="12" y="371" width="20" height="20"/><use href="#ah" x="9" y="394" width="20" height="20"/><use href="#an" x="9" y="417" width="20" height="20"/>
<use href="#ab" x="9" y="446" width="20" height="20"/><use href="#ad" x="9" y="468" width="20" height="20"/><use href="#ae" x="9" y="490" width="20" height="20"/>
<text x="12" y="527" style="font:bold 7px 'Liberation Mono',monospace" fill="#000">XYZ</text><use href="#xy" x="9" y="521" width="20" height="20"/>
<use href="#gd" x="9" y="541" width="20" height="20"/>
<path d="M18 581v7l-4-3.500z" fill="#000"/>
<use href="#s1" x="9" y="615" width="20" height="20"/><use href="#s2" x="9" y="637" width="20" height="20"/><use href="#s3" x="9" y="659" width="20" height="20"/><use href="#s4" x="9" y="682" width="20" height="20"/><use href="#s5" x="9" y="703" width="20" height="20"/>
<path d="M18 725v7l-4-3.500z" fill="#000"/>
<use href="#dt" x="38" y="155" width="20" height="20"/><use href="#cu" x="38" y="178" width="20" height="20"/>
<use href="#st2" x="38" y="207" width="20" height="20"/><use href="#sw" x="38" y="228" width="20" height="20"/><use href="#el" x="38" y="252" width="20" height="20"/><use href="#bh2" x="38" y="273" width="20" height="20"/><use href="#bw2" x="38" y="297" width="20" height="20"/><use href="#vb" x="38" y="318" width="20" height="20"/><use href="#bv2" x="38" y="340" width="20" height="20"/><use href="#cu" x="38" y="361" width="20" height="20"/><use href="#cw" x="38" y="383" width="20" height="20"/>
<use href="#dt" x="38" y="413" width="20" height="20"/><use href="#dv" x="38" y="435" width="20" height="20"/><use href="#dx" x="38" y="457" width="20" height="20"/><use href="#dy" x="38" y="480" width="20" height="20"/><use href="#dz" x="38" y="502" width="20" height="20"/>
<use href="#hm" x="42" y="542"/>
<use href="#ml" x="38" y="577" width="18" height="18"/><path d="M54 580v7l4-3.500z" fill="#000"/>
<use href="#ms2" x="39" y="607" width="20" height="20"/><use href="#ml3" x="39" y="629" width="20" height="20"/><use href="#mw" x="39" y="651" width="20" height="20"/><use href="#mw" x="39" y="673" width="20" height="20"/><use href="#md" x="39" y="695" width="20" height="20"/>
<path d="M48 725v7l-4-3.500z" fill="#000"/>
</g>

<!-- tree -->
<rect x="259" y="141" width="6" height="453" fill="#f6f3ee"/>
<rect x="66.500" y="141.500" width="192" height="426" fill="#fff" stroke="#77776c"/>
<g stroke="#999" stroke-dasharray="1 1" fill="none">
<path d="M77.500 158v-5h14M98.500 153v324M98.500 171h14M119.500 176v175M119.500 189h12M119.500 207h12M119.500 225h12M119.500 243h12M119.500 261h12M119.500 279h12M119.500 297h12M119.500 315h12M119.500 333h12M119.500 351h12M98.500 369h12M98.500 387h12M98.500 405h12M98.500 423h12M98.500 441h12M98.500 459h12M98.500 477h12"/>
</g>
<g fill="#fff" stroke="#8a8a7c">
<rect x="73.500" y="149.500" width="8" height="8"/><rect x="94.500" y="167.500" width="8" height="8"/>
<rect x="115.500" y="185.500" width="8" height="8"/><rect x="115.500" y="203.500" width="8" height="8"/><rect x="115.500" y="221.500" width="8" height="8"/><rect x="115.500" y="239.500" width="8" height="8"/><rect x="115.500" y="257.500" width="8" height="8"/><rect x="115.500" y="311.500" width="8" height="8"/><rect x="115.500" y="347.500" width="8" height="8"/>
<rect x="94.500" y="365.500" width="8" height="8"/><rect x="94.500" y="383.500" width="8" height="8"/><rect x="94.500" y="401.500" width="8" height="8"/><rect x="94.500" y="419.500" width="8" height="8"/><rect x="94.500" y="437.500" width="8" height="8"/>
</g>
<path d="M75 153.500h5M96 171.500h5M117 189.500h5M119.500 187v5M117 207.500h5M119.500 205v5M117 225.500h5M119.500 223v5M117 243.500h5M119.500 241v5M117 261.500h5M119.500 259v5M117 315.500h5M119.500 313v5M117 351.500h5M119.500 349v5M96 369.500h5M98.500 367v5M96 387.500h5M98.500 385v5M96 405.500h5M98.500 403v5M96 423.500h5M98.500 421v5M96 441.500h5M98.500 439v5" stroke="#000"/>
<use href="#r0" x="89" y="145" width="18" height="18"/>
<rect x="110" y="145" width="88" height="17" fill="#eee7df"/>
<text class="m" x="111" y="157">Hand_Vacuum.e3</text>
<use href="#t1" x="109" y="161" width="20" height="20"/><text class="c" x="132" y="175">实体</text><text class="m" x="165" y="175">(152)</text>
<use href="#t7" x="131" y="179" width="20" height="20"/><text class="m" x="159" y="193">SObj</text><text class="c" x="195" y="193">编号1</text><text class="m" x="234" y="193">(189</text>
<use href="#t2" x="130" y="197" width="20" height="20"/><text class="c" x="153" y="211">贯穿切除</text><text class="m" x="210" y="211">(174)</text>
<use href="#t2" x="130" y="215" width="20" height="20"/><text class="c" x="153" y="229">贯穿切除</text><text class="m" x="210" y="229">(171)</text>
<use href="#t2" x="130" y="233" width="20" height="20"/><text class="c" x="153" y="247">贯穿切除</text><text class="m" x="210" y="247">(168)</text>
<use href="#t2" x="130" y="251" width="20" height="20"/><text class="c" x="153" y="265">贯穿切除</text><text class="m" x="210" y="265">(165)</text>
<use href="#t3" x="130" y="269" width="20" height="20"/><text class="c" x="153" y="283">抽壳</text><text class="m" x="186" y="283">(162)</text>
<use href="#t4" x="130" y="287" width="20" height="20"/><text class="c" x="153" y="301">圆角</text><text class="m" x="186" y="301">(161)</text>
<use href="#t5" x="130" y="305" width="20" height="20"/><text class="c" x="153" y="319">旋转凸台</text><text class="m" x="210" y="319">(160)</text>
<use href="#t4" x="130" y="323" width="20" height="20"/><text class="c" x="153" y="337">圆角</text><text class="m" x="186" y="337">(153)</text>
<use href="#t6" x="130" y="341" width="20" height="20"/><text class="c" x="153" y="355">删减</text><text class="m" x="186" y="355">(152)</text>
<use href="#t8" x="109" y="359" width="20" height="20"/><text class="m" x="132" y="373">Switch_Assb</text>
<use href="#t9" x="109" y="377" width="20" height="20"/><use href="#lb" x="112" y="375" width="18" height="18"/><use href="#t8" x="127" y="377" width="20" height="20"/><text class="m" x="150" y="391">Battery</text>
<use href="#t8" x="109" y="395" width="20" height="20"/><text class="m" x="132" y="409">Motor_Assb</text>
<use href="#t8" x="109" y="413" width="20" height="20"/><text class="m" x="132" y="427">Fan_Housing</text>
<use href="#t8" x="109" y="431" width="20" height="20"/><text class="m" x="132" y="445">Fan</text>
<use href="#ta" x="109" y="449" width="20" height="20"/><text class="c" x="132" y="463">草图</text><text class="m" x="165" y="463">(35)</text>
<use href="#ta" x="109" y="467" width="20" height="20"/><text class="c" x="132" y="481">草图</text><text class="m" x="165" y="481">(29)</text>
<!-- scrollbar -->
<rect x="68" y="550" width="190" height="17" fill="#f4f4f0"/>
<rect x="69" y="551" width="15" height="15" rx="2" fill="#c8d4f0" stroke="#fff"/><path d="M79 554l-5 4.500 5 4.500" stroke="#4a6ca8" stroke-width="2" fill="none"/>
<rect x="85" y="551" width="148" height="15" rx="2" fill="#b8c4e4" stroke="#fff"/><rect x="87" y="561" width="144" height="3" fill="#c8d4f0"/>
<path d="M155.500 555v7M157.500 555v7M159.500 555v7M161.500 555v7" stroke="#eef"/>
<rect x="241" y="551" width="15" height="15" rx="2" fill="#c8d4f0" stroke="#fff"/><path d="M246 554l5 4.500-5 4.500" stroke="#4a6ca8" stroke-width="2" fill="none"/>
<!-- tree tabs -->
<rect x="66" y="568" width="193" height="26" fill="#eee7df"/>
<path d="M100 571.500h159" stroke="#808070"/><path d="M66.500 568v24" stroke="#777"/>
<path d="M66 592.500h34v-21" stroke="#fff" fill="none"/>
<path d="M100.500 572v18h31.500v-18M133.500 572v18h32.500v-18M167.500 572v18h32.500v-18M201.500 572v18h33v-18" stroke="#77776c" fill="none"/>
<path d="M100.500 591h32M133.500 591h33M167.500 591h33M201.500 591h33" stroke="#77776c"/>
<use href="#ic1" x="69" y="574" width="18" height="18"/><use href="#ic2" x="106" y="572" width="18" height="18"/><use href="#ic3" x="138" y="572" width="18" height="18"/><use href="#ic4" x="172" y="573" width="17" height="17"/><use href="#ic5" x="206" y="572" width="18" height="18"/>

<!-- viewport -->
<rect x="265" y="141" width="753" height="428" fill="#fff"/>
<g clip-path="url(#part)" shape-rendering="crispEdges">
<rect x="266" y="180" width="752" height="390" fill="#860800"/>
<polygon fill="#b00000" points="266,229 330,222 397,208 480,203 564,198 640,197 700,197 770,200 824,205 870,208 900,215 1024,240 1024,600 266,600"/>
<polygon fill="#d81200" points="266,229 300,225 364,218 430,216 497,214 564,217 600,216 664,220 730,225 794,232 824,233 870,240 1024,262 1024,600 266,600"/>
<polygon fill="#ff0000" points="266,250 300,244 336,240 400,236 440,234 400,241 336,246 266,256"/>
<polygon fill="#d83000" points="660,236 700,238 730,244 764,248 824,250 900,262 1024,280 1024,600 660,600"/>
<polygon fill="#f04000" points="266,255 330,247 400,240 464,235 564,233 640,234 700,240 730,249 764,252 794,255 824,258 900,266 1024,285 1024,600 266,600"/>
<polygon fill="#f06400" points="266,265 330,258 400,252 500,248 564,253 590,257 564,259 500,266 430,278 330,288 266,293"/>
<polygon fill="#f09000" points="266,275 300,272 335,269 340,270 300,276 266,283"/>
<polygon fill="#f06400" points="914,288 921,280 1018,295 1018,353 984,337 951,313"/>
<polygon fill="#f09000" points="969,302 997,298 1018,302 1018,337 997,320"/>
<polygon fill="#d83000" points="266,299 330,291 397,283 480,276 564,271 640,268 700,267 764,267 824,277 874,287 924,307 984,347 1024,372 1024,600 266,600"/>
<polygon fill="#b01500" points="266,303 330,296 397,288 480,283 564,279 664,277 764,280 824,291 874,303 924,323 957,343 984,377 989,387 981,403 960,600 266,600"/>
<polygon fill="#a00800" points="266,308 330,303 397,297 480,292 564,288 664,288 764,292 824,305 857,313 907,337 931,373 907,390 884,420 870,460 880,500 891,517 924,540 957,600 266,600"/>
<polygon fill="#860800" points="266,313 330,308 397,303 480,299 564,297 664,297 764,300 824,312 860,322 886,358 860,393 840,430 842,467 863,513 905,600 266,600"/>
<polygon fill="#800000" points="266,316 397,308 480,306 564,305 664,310 764,312 824,318 840,332 855,353 830,417 833,440 850,490 880,540 898,600 266,600"/>
<polygon fill="#860800" points="266,365 364,372 430,378 500,390 564,405 600,420 650,445 717,470 767,497 813,545 835,568 835,600 266,600"/>
<polygon fill="#a00800" points="266,350 297,350 364,363 404,372 364,368 266,365"/>
<polygon fill="#b00000" points="266,375 290,375 320,381 266,381"/>
<polygon fill="#601000" points="266,320 397,313 480,316 564,315 664,322 734,327 804,332 818,357 807,393 788,447 797,487 820,533 853,568 840,568 833,562 813,540 767,490 717,462 650,440 600,416 564,392 517,375 471,370 431,350 364,343 297,337 266,338"/>
<polygon fill="#800000" points="404,355 437,362 464,367 470,372 437,365"/>
<polygon fill="#8a3000" points="266,349 285,349 266,352"/>
<polygon fill="#3c0800" points="266,330 297,327 364,323 431,323 497,328 524,329 497,331 431,327 364,327 266,333"/>
<polygon fill="#3c0800" points="507,342 530,336 564,333 600,339 640,351 667,353 733,375 763,397 748,437 748,460 770,493 816,542 717,463 647,417 622,383 625,381 600,377 572,362 589,357 564,353"/>
<polygon fill="#860800" points="860,185 925,185 925,198 905,192 890,200 860,198"/>
<polygon fill="#ff0000" points="902,207 915,201 930,203 925,210"/>
<!-- blue part -->
<polygon fill="#2a62c8" points="869,203 920,202 970,209 997,206 1018,193 1018,243 904,225 867,220"/>
<polygon fill="#10386a" points="871,205 920,204 970,211 997,208 1018,195 1018,241 904,222 869,218"/>
<polygon fill="#2c5cc0" points="867,218 902,224 896,245 879,242 871,230"/>
<polygon fill="#4078d8" points="873,220 888,222 890,240 880,240"/>
<polygon fill="#183c70" points="892,232 901,233 896,245 890,243"/>
<polygon fill="#4a4a90" points="1007,224 1018,213 1018,227"/>
<polygon fill="#3a2e1c" points="901,224 1018,242 1018,278 896,260"/>
<polygon fill="#64522c" points="896,260 1018,278 1018,295 904,277"/>
<!-- machine -->
<polygon fill="#d83000" points="980,370 990,376 990,415 1018,420 1018,560 965,545 960,530 960,400"/>
<polygon fill="#333c3c" points="992,375 1018,380 1018,393 1009,412 987,407"/>
<polygon fill="#3d4a50" points="887,422 924,408 987,406 997,413 1004,427 981,530 967,543 957,547 924,533 887,517 876,503 876,467 882,440"/>
<polygon fill="#5c7070" points="887,422 907,416 890,437 882,442"/>
<polygon fill="#4e5c64" points="907,416 960,408 985,412 985,420 940,415 915,425 905,440 895,445"/>
<polygon fill="#202838" points="877,465 904,445 904,483 884,503 876,502"/>
<polygon fill="#6a7a90" points="920,425 960,420 990,424 975,435 920,430"/>
<polygon fill="#7a8090" points="885,505 890,505 891,517 886,515"/>
<polygon fill="#50586a" points="944,520 967,527 967,543 947,540"/>
<polygon fill="#c81800" points="975,530 988,535 987,547 967,542"/>
<polygon fill="#787870" points="913,426 972,437 970,445 909,440"/>
<polygon fill="#505058" points="909,442 970,446 968,460 906,452"/>
<polygon fill="#808078" points="906,452 968,460 965,473 905,465"/>
<polygon fill="#a0a0a4" points="905,465 965,473 963,487 903,482"/>
<polygon fill="#b8a8b4" points="903,482 963,487 962,497 904,492"/>
<polygon fill="#c4c4c4" points="904,492 962,497 962,517 935,512 915,503"/>
<polygon fill="#808078" points="984,423 1004,427 1000,437 974,435"/>
<polygon fill="#505058" points="974,437 1000,438 998,448 971,447"/>
<polygon fill="#808078" points="971,448 998,449 994,470 968,469"/>
<polygon fill="#a0a0a4" points="968,470 994,470 991,493 965,493"/>
<polygon fill="#c0b0bc" points="965,493 991,493 989,510 964,510"/>
<polygon fill="#c0c0c0" points="964,510 989,510 989,535 964,525"/>
<polygon fill="#3d4a50" points="915,503 962,517 962,522 948,520 915,510"/>
<polygon fill="#4a7868" points="1017,393 1004,427 989,497 1018,502"/>
<polygon fill="#2e7058" points="1018,393 1008,420 1018,425"/>
<polygon fill="#40c490" points="990,498 1018,502 1018,565 987,560"/>
<polygon fill="#333c3c" points="961,543 987,547 989,570 956,570"/>
<polygon fill="#507a70" points="987,560 1018,565 1018,570 988,570"/>
<path d="M916 426l60 11" stroke="#d8d8d0" fill="none"/><path d="M908 451l62 12M907 441l60 7" stroke="#d8d8d0" fill="none"/>
<path d="M976 437l-14 80" stroke="#eee" stroke-dasharray="4 2" fill="none"/>
<path d="M915 502l50 12" stroke="#333" fill="none" stroke-dasharray="6 1"/>
</g>
<g fill="none" stroke="#000" stroke-width="1">
<path d="M464 240Q465 236 470 235.500L500 232 540 228.500 564 227 600 227.500 640 230 680 236Q692 238 698 245 703 250 702 258L697 282Q696 286 690 286L650 279 600 270 564 267 540 263 500 256 470 252Q464 250 464 240Z"/>
<path d="M717 390L763 397Q782 400 781 413L774 449Q772 460 760 459L715 453Q697 450 699 437L706 399Q708 389 717 390Z"/>
</g>
<g fill="#fff"><rect x="851" y="209" width="1" height="1"/><rect x="852" y="216" width="1" height="1"/><rect x="852" y="234" width="1" height="1"/><rect x="828" y="290" width="1" height="1"/><rect x="821" y="302" width="1" height="1"/><rect x="815" y="312" width="1" height="1"/><rect x="725" y="447" width="1" height="1"/></g>
<path d="M265.500 141v428" stroke="#222"/><path d="M265 141.500h753" stroke="#777"/>
<rect x="265" y="568" width="753" height="1" fill="#000"/>
<rect x="265" y="569" width="753" height="1" fill="#fff"/>
<!-- view tabs -->
<rect x="265" y="570" width="753" height="24" fill="#eee7df"/>
<path d="M324 572.500h694" stroke="#807f70"/>
<rect x="265" y="594" width="753" height="1" fill="#fff"/>
<path d="M324.500 573v19h65l4-3v-16M394.500 590h66l5-3v-14" fill="none" stroke="#77776c"/>
<use href="#mo" x="270" y="576" width="17" height="17"/>
<text class="c" x="293" y="589">模型</text>
<path d="M337 575l8 8-8 8-8-8z" fill="#fff" stroke="#000"/><path d="M337 579l4 4-4 4-4-4z" fill="none" stroke="#000"/>
<text x="351" y="588" style="font:12px 'Liberation Sans','Noto Sans CJK SC',sans-serif" fill="#000">2D草图</text>
<path d="M409.500 578v9h7" stroke="#333" fill="none"/><path d="M403 584v5M401 586h4" stroke="#555"/>
<text x="423" y="588" style="font:12px 'Liberation Sans','Noto Sans CJK SC',sans-serif" fill="#000">3D草图</text>

<!-- bottom panel -->
<rect x="68.500" y="610.500" width="11" height="11" fill="#eee7df" stroke="#fff"/><path d="M71 613l5 5M76 613l-5 5" stroke="#000" stroke-width="1.500"/>
<path d="M72.500 626v110M75.500 626v110" stroke="#fff"/><path d="M73.500 626v110M76.500 626v110" stroke="#a09c90"/>
<rect x="92" y="611" width="886" height="129" fill="#eee7df"/>
<rect x="97.500" y="617.500" width="877" height="100" fill="#fff" stroke="#77776c" stroke-width="1"/>
<rect x="97" y="616" width="878" height="2" fill="#77776c"/>
<path d="M978.500 611v129" stroke="#77776c"/>
<rect x="107" y="620" width="64" height="64" fill="#fdfbf4"/>
<path d="M107 684v-64h64" fill="none" stroke="#fff"/><path d="M107 683.500h64M170.500 620v64" stroke="#77776c" stroke-width="1.500"/>
<g fill="#b8c0e0" opacity=".7"><rect x="112" y="628" width="2" height="1"/><rect x="115" y="640" width="1" height="2"/><rect x="160" y="632" width="2" height="1"/><rect x="164" y="645" width="2" height="1"/><rect x="112" y="655" width="2" height="1"/><rect x="158" y="662" width="1" height="2"/><rect x="162" y="672" width="2" height="1"/><rect x="114" y="670" width="1" height="2"/><rect x="150" y="678" width="2" height="1"/><rect x="165" y="625" width="2" height="1"/></g>
<path d="M125 631Q130 624 138 628L159 642 143 678Q130 680 120 672Z" fill="#c82000"/>
<path d="M127 634l29 10-14 32-22-10z" fill="url(#cup)"/>
<path d="M120 668l4-2 12 6-3 3z" fill="#901000"/>
<path d="M132 663v19l4-4 3 7 3-1-3-7 5-1z" fill="#fff" stroke="#000"/>
<rect x="110" y="688" width="52" height="14" fill="#eee7df"/>
<text class="m" x="112" y="698">Vac_Boss</text>
<!-- bottom tabs -->
<path d="M95 737.500h82V721M179 737.500h52V721M233 737.500h76V721M311 737.500h64V721M377 737.500h75V721M455 737.500h66V721M521.500 737.500h46V721M569 737.500h83V721M653 737.500h64V721M719 737.500h52V721M773 737.500h59V721M833 737.500h58V721M892 738.500h73l3-3V720" fill="none" stroke="#77776c"/>
<path d="M95 737V720M179 737V720M233 737V720M311 737V720M377 737V720M455 737V720M521.500 737V720M569 737V720M653 737V720M719 737V720M773 737V720M833 737V720" stroke="#fff"/>
<text class="m" x="100" y="733">AdvSamples</text><text class="m" x="183" y="733">Casting</text><text class="m" x="238" y="733">ExtProfiles</text><text class="m" x="316" y="733">Extrusion</text><text class="m" x="381" y="733">GenProfiles</text><text class="m" x="459" y="733">GenShapes</text><text class="m" x="526" y="733">Holes</text><text class="m" x="574" y="733">Key&amp;Keyhouse</text><text class="m" x="657" y="733">MetalMach</text><text class="m" x="724" y="733">Plastic</text><text class="m" x="777" y="733">SheetMet</text><text class="m" x="838" y="733">ThrHoles</text>
<text class="c" x="898" y="735">手持吸尘器</text>
<!-- status bar -->
<path d="M5 743.500h1013" stroke="#fff"/><path d="M5 742.500h1013" stroke="#a09c90"/>
<rect x="376.500" y="746.500" width="362" height="17" fill="none" stroke="#a09c90"/>
<path d="M739.500 744v20" stroke="#fff"/>
<rect x="746" y="751" width="10" height="10" fill="#b00000" stroke="#999"/><use href="#tr" x="773" y="758"/>
<path d="M787 760.500h35" stroke="#000"/><path d="M806 759l3-7 6-4 3 3-4 6z" fill="#e8e8e8" stroke="#333"/><use href="#tr" x="823" y="758"/>
<path d="M840 750c6-3 8 0 5 3s-6 3-4 6h10" fill="none" stroke="#000"/><path d="M854 760l5-8 5-4 3 3-3 6-6 4z" fill="#e89020" stroke="#805010"/><use href="#tr" x="873" y="758"/>
<path d="M895 749l-2 3 3 2" stroke="#d02038" fill="none"/><path d="M897 751c5 0 6 3 3 5s3 4 5 6" fill="none" stroke="#2c6c70"/><use href="#tr" x="910" y="758"/>
<use href="#oc" x="925" y="746" width="20" height="20"/><use href="#tr" x="949" y="758"/>
<use href="#gd" x="966" y="746" width="18" height="18"/><path d="M967 750l9 8M976 749l-8 8" stroke="#d82050" stroke-width="2"/><use href="#tr" x="987" y="758"/>
<rect x="995.500" y="746.500" width="6" height="17" fill="none" stroke="#a09c90"/>
<path d="M1010 763l8-8M1013 763l5-5M1016 763l2-2" stroke="#999"/>
<!-- watermark -->
<path d="M826 706C815 708 808 696 815 688 810 678 822 670 830 674 834 664 848 662 854 668 864 662 880 672 877 684 882 694 872 706 862 702 856 708 842 708 836 704 832 707 829 707 826 706Z" fill="#fff" stroke="#000" stroke-width="2.500"/>
<ellipse cx="859" cy="703" rx="6" ry="3" fill="#fff" stroke="#000" stroke-width="1.500"/><ellipse cx="854" cy="710" rx="4" ry="2.500" fill="#fff" stroke="#000" stroke-width="1.500"/><ellipse cx="851" cy="714" rx="3" ry="2" fill="#fff" stroke="#000" stroke-width="1.500"/>
<text x="838" y="698" style="font:bold 36px 'Liberation Serif',serif" fill="#e0982c" stroke="#e0982c" stroke-width=".6" textLength="22">3</text>
<text class="wc" x="880" y="686" textLength="30">黄涛</text>
<text class="w" x="912" y="686" textLength="102">JohnnyHuang</text>
<text class="w" x="882" y="706" textLength="97">ThinkDesign</text>
<text class="wc" x="982" y="706" textLength="30">论坛</text>
</svg>
</body></html>
